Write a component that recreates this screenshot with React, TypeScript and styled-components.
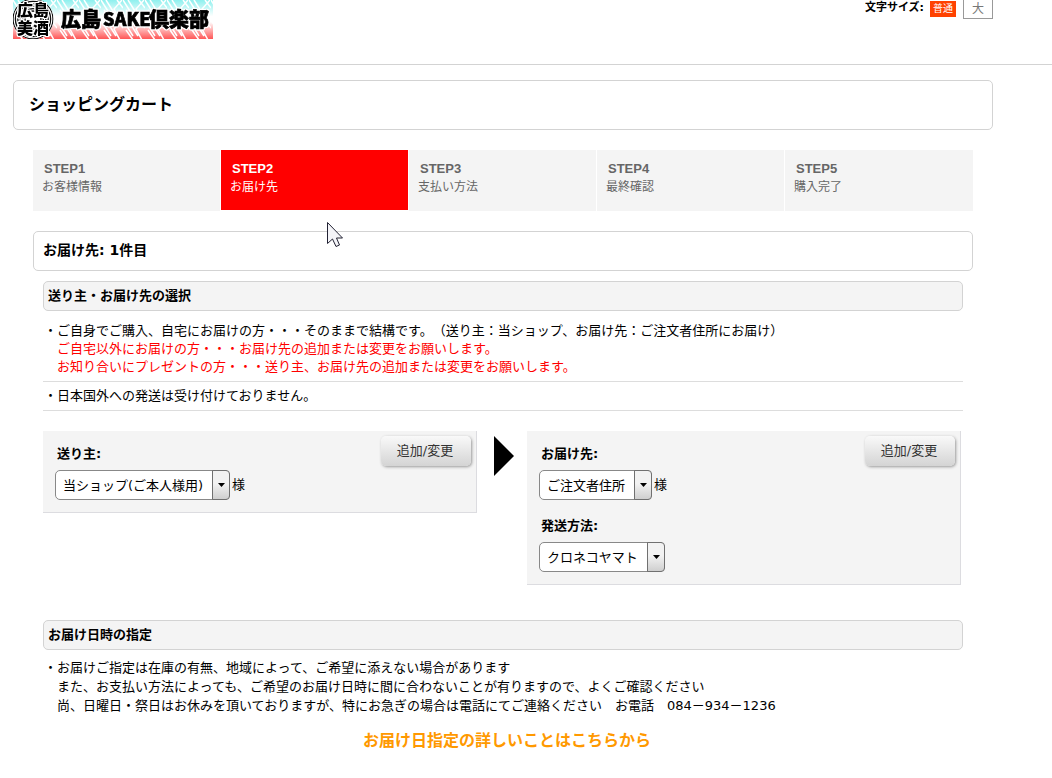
import React from "react";
import styled, { createGlobalStyle } from "styled-components";

const GlobalStyle = createGlobalStyle`
  *, *::before, *::after { box-sizing: border-box; }
  body {
    margin: 0;
    background: #fff;
    color: #000;
    font-family: "DejaVu Sans", "Noto Sans CJK JP", sans-serif;
    font-size: 13px;
    line-height: 18px;
    text-spacing-trim: space-all;
  }
  h1, h2, h3, p, ul, ol { margin: 0; padding: 0; }
  ul, ol { list-style: none; }
`;

const Header = styled.header`
  height: 65px;
  padding-left: 13px;
  border-bottom: 1px solid #d3d3d3;
`;

const HeaderInner = styled.div`
  display: flex;
  justify-content: space-between;
  align-items: flex-start;
  max-width: 980px;
`;

const LogoLink = styled.a`
  display: block;
  line-height: 0;
`;

const LogoLettering = styled.g`
  fill: #000;
  font-family: "Noto Sans CJK JP", sans-serif;
  font-weight: 900;
  filter: drop-shadow(1px 0 0 #fff) drop-shadow(-1px 0 0 #fff) drop-shadow(0 1px 0 #fff) drop-shadow(0 -1px 0 #fff);
`;

const TextSize = styled.div`
  display: flex;
  align-items: flex-start;
`;

const TextSizeLabel = styled.span`
  margin-right: 6px;
  font-size: 11px;
  font-weight: bold;
  line-height: 15px;
`;

const SizeButton = styled.button<{ $current?: boolean }>`
  width: ${(p) => (p.$current ? "26px" : "30px")};
  height: ${(p) => (p.$current ? "16px" : "19px")};
  margin: ${(p) => (p.$current ? "1px 7px 0 0" : "0")};
  padding: 0;
  border: ${(p) => (p.$current ? "0" : "1px solid #999")};
  border-top: 0;
  background: ${(p) => (p.$current ? "#ff4200" : "#fff")};
  color: ${(p) => (p.$current ? "#fff" : "#777")};
  font-family: inherit;
  font-size: ${(p) => (p.$current ? "10px" : "12px")};
  line-height: 16px;
`;

const Main = styled.main`
  max-width: 980px;
  margin: 15px 0 0 13px;
`;

const PageTitle = styled.h1`
  padding: 12px 15px;
  border: 1px solid #d3d3d3;
  border-radius: 5px;
  font-size: 16px;
  line-height: 24px;
`;

const Checkout = styled.div`
  position: relative;
  padding: 20px;
`;

const Steps = styled.ol`
  display: grid;
  grid-template-columns: repeat(5, 1fr);
`;

const Step = styled.li<{ $current?: boolean }>`
  height: ${(p) => (p.$current ? "60px" : "61px")};
  padding: 10px 9px;
  border-right: 1px solid #fff;
  background: ${(p) => (p.$current ? "#f00" : "#f4f4f4")};
  color: ${(p) => (p.$current ? "#fff" : "#666")};
  font-size: 12px;
  &:last-child { border-right: 0; }
`;

const StepNumber = styled.strong`
  display: block;
  padding-left: 2px;
  font-family: "Liberation Sans", sans-serif;
  font-size: 13px;
`;

const Pointer = styled.svg`
  position: absolute;
  top: 92px;
  left: 314px;
`;

const DeliveryTitle = styled.h2`
  margin-top: 20px;
  padding: 9px 9px 11px;
  border: 1px solid #d3d3d3;
  border-radius: 5px;
  font-size: 14px;
`;

const Section = styled.section`
  margin: 10px 10px 0;
  & + & { margin-top: 35px; }
`;

const SectionTitle = styled.h3`
  padding: 5px 4px;
  border: 1px solid #d3d3d3;
  border-radius: 5px;
  background: #f4f4f4;
  font-size: 13px;
`;

const Notes = styled.ul`
  margin-top: 6px;
`;

const Note = styled.li`
  padding: 5px 0 5px 14px;
  border-bottom: 1px solid #ddd;
  text-indent: -13px;
`;

const ScheduleNote = styled.p`
  padding: 8px 0 0 14px;
  line-height: 19px;
  text-indent: -13px;
`;

const NoteLine = styled.span<{ $alert?: boolean }>`
  display: block;
  color: ${(p) => (p.$alert ? "#f00" : "inherit")};
  text-indent: 0;
`;

const Route = styled.div`
  display: flex;
  align-items: flex-start;
  margin: 20px 2px 0 0;
`;

const Panel = styled.div`
  display: flex;
  flex: 1;
  justify-content: space-between;
  align-items: flex-start;
  padding: 0 5px 0 12px;
  border: solid #dcdce0;
  border-width: 0 1px 1px 0;
  background: #f4f4f4;
`;

const Fields = styled.div`
  display: grid;
  gap: 17px;
  padding: 14px 0 12px;
`;

const FieldLabel = styled.label`
  display: block;
  margin-bottom: 7px;
  padding-left: 2px;
  font-weight: bold;
`;

const FieldRow = styled.div`
  display: flex;
  align-items: center;
  gap: 2px;
`;

const SelectBox = styled.span`
  display: grid;
  grid-template-columns: auto 18px;
  height: 30px;
`;

const Select = styled.select`
  grid-area: 1 / 1 / 2 / 3;
  appearance: none;
  margin: 0;
  padding: 0 25px 0 7px;
  border: 1px solid #888;
  border-radius: 5px;
  background: #fff;
  color: #000;
  font-family: inherit;
  font-size: 13px;
`;

const SelectArrow = styled.span`
  display: flex;
  grid-area: 1 / 2;
  z-index: 1;
  align-items: center;
  justify-content: center;
  border: 1px solid #707070;
  border-radius: 0 4px 4px 0;
  background: linear-gradient(#f2f2f2 45%, #cfcfcf);
  pointer-events: none;
`;

const ChangeButton = styled.button`
  width: 90px;
  height: 30px;
  margin-top: 5px;
  padding: 0 2px 3px 0;
  border: 0;
  border-radius: 5px;
  background: linear-gradient(#f9f9f9, #d4d4d4);
  box-shadow: 1px 1px 3px #999;
  color: #333;
  font-family: inherit;
  font-size: 13px;
`;

const RouteArrow = styled.svg`
  flex: none;
  margin: 5px 13px 0 17px;
`;

const Guide = styled.p`
  padding: 14px 0 24px 8px;
  font-size: 16px;
  font-weight: bold;
  line-height: 24px;
  text-align: center;
`;

const GuideLink = styled.a`
  color: #f90;
  text-decoration: none;
`;

function Logo() {
  return (
    <svg width="200" height="39" viewBox="0 0 200 39" role="img" aria-label="広島美酒 広島SAKE倶楽部">
      <defs>
        <linearGradient id="sky" x1="0" y1="0" x2="0" y2="1">
          <stop offset="0" stopColor="#8ef0ee" />
          <stop offset="0.42" stopColor="#fff" />
          <stop offset="0.56" stopColor="#fff" />
          <stop offset="1" stopColor="#ff5656" />
        </linearGradient>
        <pattern id="weave" width="22" height="20" patternUnits="userSpaceOnUse">
          <path d="M0 0L10 16M5 0L15 16M21 0L13 9L19 20M10 20L3 10M16 0L22 8" stroke="#fff" strokeWidth="1.5" fill="none" />
        </pattern>
        <clipPath id="crest"><circle cx="20" cy="19" r="20.5" /></clipPath>
      </defs>
      <rect width="200" height="39" fill="url(#sky)" />
      <rect width="200" height="39" fill="url(#weave)" />
      <g clipPath="url(#crest)">
        <circle cx="20" cy="19" r="21" fill="#fff" />
        {[20, 17.6, 15.2, 12.8, 10.4, 8].map((r) => (
          <circle key={r} cx="20" cy="19" r={r} fill="none" stroke="#111" strokeWidth="1.3" />
        ))}
      </g>
      <LogoLettering>
        <text x="4" y="16" fontSize="16">広島</text>
        <text x="4" y="34" fontSize="16">美酒</text>
      </LogoLettering>
      <LogoLettering stroke="#000" strokeWidth="0.7">
        <text x="48" y="27" fontSize="20">広島</text>
        <text x="90" y="26" fontSize="18">SAKE</text>
        <text x="136" y="27" fontSize="20">倶楽部</text>
      </LogoLettering>
    </svg>
  );
}

function SelectField({ id, label, value, suffix }: { id: string; label: string; value: string; suffix?: string }) {
  return (
    <div>
      <FieldLabel htmlFor={id}>{label}</FieldLabel>
      <FieldRow>
        <SelectBox>
          <Select id={id} defaultValue={value}>
            <option>{value}</option>
          </Select>
          <SelectArrow>
            <svg width="7" height="4" viewBox="0 0 7 4" aria-hidden="true">
              <path d="M0 0H7L3.5 4Z" />
            </svg>
          </SelectArrow>
        </SelectBox>
        {suffix}
      </FieldRow>
    </div>
  );
}

const steps = ["お客様情報", "お届け先", "支払い方法", "最終確認", "購入完了"];

export default function App() {
  return (
    <>
      <GlobalStyle />
      <Header>
        <HeaderInner>
          <LogoLink href="#"><Logo /></LogoLink>
          <TextSize>
            <TextSizeLabel>文字サイズ:</TextSizeLabel>
            <SizeButton type="button" $current>普通</SizeButton>
            <SizeButton type="button">大</SizeButton>
          </TextSize>
        </HeaderInner>
      </Header>
      <Main>
        <PageTitle>ショッピングカート</PageTitle>
        <Checkout>
          <Steps>
            {steps.map((name, i) => (
              <Step key={name} $current={i === 1} aria-current={i === 1 ? "step" : undefined}>
                <StepNumber>STEP{i + 1}</StepNumber>
                {name}
              </Step>
            ))}
          </Steps>
          <DeliveryTitle>お届け先: 1件目</DeliveryTitle>
          <Section>
            <SectionTitle>送り主・お届け先の選択</SectionTitle>
            <Notes>
              <Note>
                ・ご自身でご購入、自宅にお届けの方・・・そのままで結構です。（送り主：当ショップ、お届け先：ご注文者住所にお届け）
                <NoteLine $alert>ご自宅以外にお届けの方・・・お届け先の追加または変更をお願いします。</NoteLine>
                <NoteLine $alert>お知り合いにプレゼントの方・・・送り主、お届け先の追加または変更をお願いします。</NoteLine>
              </Note>
              <Note>・日本国外への発送は受け付けておりません。</Note>
            </Notes>
            <Route>
              <Panel>
                <Fields>
                  <SelectField id="sender" label="送り主:" value="当ショップ(ご本人様用)" suffix="様" />
                </Fields>
                <ChangeButton type="button">追加/変更</ChangeButton>
              </Panel>
              <RouteArrow width="20" height="40" viewBox="0 0 20 40" aria-hidden="true">
                <path d="M0 0L20 20L0 40Z" />
              </RouteArrow>
              <Panel>
                <Fields>
                  <SelectField id="recipient" label="お届け先:" value="ご注文者住所" suffix="様" />
                  <SelectField id="carrier" label="発送方法:" value="クロネコヤマト" />
                </Fields>
                <ChangeButton type="button">追加/変更</ChangeButton>
              </Panel>
            </Route>
          </Section>
          <Section>
            <SectionTitle>お届け日時の指定</SectionTitle>
            <ScheduleNote>
              ・お届けご指定は在庫の有無、地域によって、ご希望に添えない場合があります
              <NoteLine>また、お支払い方法によっても、ご希望のお届け日時に間に合わないことが有りますので、よくご確認ください</NoteLine>
              <NoteLine>尚、日曜日・祭日はお休みを頂いておりますが、特にお急ぎの場合は電話にてご連絡ください　お電話　084－934－1236</NoteLine>
            </ScheduleNote>
            <Guide><GuideLink href="#">お届け日指定の詳しいことはこちらから</GuideLink></Guide>
          </Section>
          <Pointer width="17" height="26" viewBox="0 0 17 26" aria-hidden="true">
            <path d="M0.5 0.5V21.5L5.5 17L9 24.5L12.5 23L9.5 16H15.5Z" fill="#f4f4f8" stroke="#223" />
          </Pointer>
        </Checkout>
      </Main>
    </>
  );
}
